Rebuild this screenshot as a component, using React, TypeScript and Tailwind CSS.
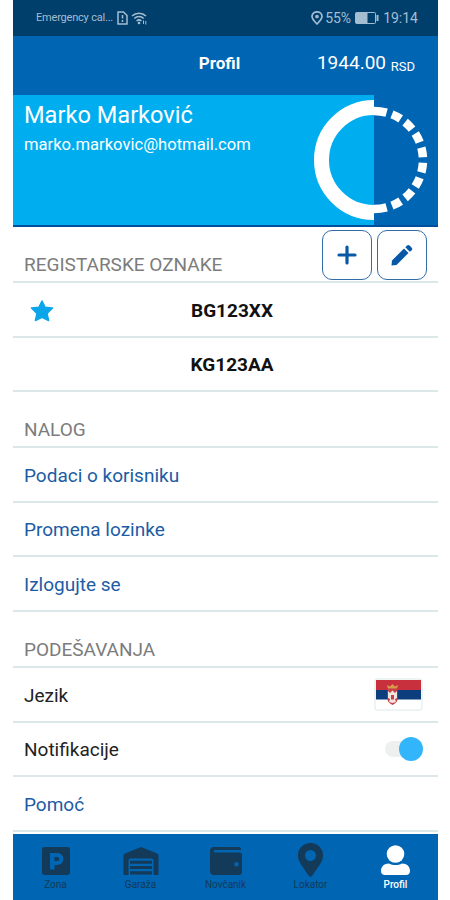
import React from "react";
import { clsx } from "clsx";

type Tab = {
  label: string;
  icon: React.ReactNode;
  active?: boolean;
};

const tabs: Tab[] = [
  {
    label: "Zona",
    icon: (
      <svg width="28" height="28" viewBox="0 0 28 28" fill="currentColor" fillRule="evenodd">
        <path d="M3 0h22a3 3 0 0 1 3 3v22a3 3 0 0 1-3 3H3a3 3 0 0 1-3-3V3a3 3 0 0 1 3-3ZM8 6v16.500h4.500v-4.500h3a6 6 0 0 0 0-12ZM12.500 10h2.800a2 2 0 0 1 0 4h-2.800Z" />
      </svg>
    ),
  },
  {
    label: "Garaža",
    icon: (
      <svg width="36" height="28" viewBox="0 0 36 28" fill="currentColor" fillRule="evenodd">
        <path d="M18 0 34 6.500a2.500 2.500 0 0 1 1.500 2.300V28H30.500V13.500a2 2 0 0 0-2-2h-21a2 2 0 0 0-2 2V28H.5V8.800A2.500 2.500 0 0 1 2 6.500Z" />
        <path d="M7 13.800h22v3H7ZM7 19h22v3H7ZM7 24.300h22v3.200H7Z" />
      </svg>
    ),
  },
  {
    label: "Novčanik",
    icon: (
      <svg width="32" height="28" viewBox="0 0 32 28" fill="currentColor" fillRule="evenodd">
        <path d="M4 0h24.500A2.500 2.500 0 0 1 31 2.500V3H5a1 1 0 0 0 0 2.500h24A3 3 0 0 1 32 8.500V25a3 3 0 0 1-3 3H4a4 4 0 0 1-4-4V4a4 4 0 0 1 4-4ZM26.500 15a2.200 2.200 0 1 0 0 4.400 2.200 2.200 0 0 0 0-4.400Z" />
      </svg>
    ),
  },
  {
    label: "Lokator",
    icon: (
      <svg className="-mb-[2px]" width="25" height="34" viewBox="0 0 25 34" fill="currentColor" fillRule="evenodd">
        <path d="M12.500 0A12.400 12.400 0 0 0 0 12.400C0 17.500 2 20 11 33a1.800 1.800 0 0 0 3 0C23 20 25 17.500 25 12.400A12.400 12.400 0 0 0 12.500 0ZM12.500 7a5.500 5.500 0 1 1 0 11 5.500 5.500 0 0 1 0-11Z" />
      </svg>
    ),
  },
  {
    label: "Profil",
    active: true,
    icon: (
      <svg width="29" height="30" viewBox="0 0 29 30" fill="currentColor">
        <circle cx="14.500" cy="9" r="8.800" />
        <path d="M8 18.500c2 1 4.200 1.500 6.500 1.500s4.500-.5 6.500-1.500c5 0 8 3 8 7.500 0 2.500-1.500 4-4 4H4c-2.500 0-4-1.500-4-4 0-4.500 3-7.500 8-7.500Z" />
      </svg>
    ),
  },
];

function StatusBar() {
  return (
    <div className="flex h-9 items-center bg-[#003e6b] pr-5 pl-[23px] text-[#a4bdd1]">
      <span className="text-[11px] tracking-[-0.200px]">Emergency cal...</span>
      <svg className="ml-1" width="11" height="14" viewBox="0 0 11 14" fill="none" stroke="currentColor" strokeWidth="1.500">
        <path d="M1 1h5.500L10 4.500V13H1ZM5.500 4v3.500M5.500 9v2" />
      </svg>
      <svg className="ml-[3px]" width="17" height="14" viewBox="0 0 17 14" fill="none" stroke="currentColor" strokeWidth="1.500">
        <path d="M1 5a10 10 0 0 1 14 0M3.300 7.500a6.700 6.700 0 0 1 9.400 0M5.600 10a3.500 3.500 0 0 1 4.800 0" />
        <circle cx="8" cy="12" r="1.300" fill="currentColor" stroke="none" />
        <path d="M12.500 9.500v3.500M14.800 10v3.500" strokeWidth="1" />
      </svg>
      <div className="ml-auto flex items-center text-[14px]">
        <svg width="12" height="14" viewBox="0 0 12 14" fill="none" stroke="currentColor" strokeWidth="1.700">
          <path d="M6 13C2.500 9.500 1 7.500 1 5.500a5 4.700 0 0 1 10 0C11 7.500 9.500 9.500 6 13Z" />
          <circle cx="6" cy="5.500" r="1" />
        </svg>
        <span className="ml-[2px]">55%</span>
        <svg className="ml-1" width="24" height="12" viewBox="0 0 24 12" fill="none" stroke="currentColor">
          <rect x=".5" y=".5" width="20" height="11" rx="1" />
          <path d="M1 1h11v10H1Z" fill="currentColor" />
          <path d="M22.500 3v6" strokeWidth="2" />
        </svg>
        <span className="ml-1">19:14</span>
      </div>
    </div>
  );
}

function ProfileCard() {
  return (
    <div className="flex h-[132px] border-b-2 border-[#004f9e] bg-linear-to-r from-[#00aeef] from-[361px] to-[#0065b3] to-[361px]">
      <div className="pl-[11px] pt-1 text-white">
        <h1 className="text-[23.600px] leading-[32px]">Marko Marković</h1>
        <p className="text-[16.600px] leading-[27px]">marko.markovic@hotmail.com</p>
      </div>
      <svg className="mt-[5px] mr-[10px] ml-auto" width="115" height="120" viewBox="0 0 115 120" fill="none" stroke="#fff">
        <path d="M61 7.500A52.500 52.500 0 0 0 61 112.500" strokeWidth="15" />
        <path
          d="M61 11A49 49 0 0 1 61 109"
          strokeWidth="8.500"
          pathLength="180"
          strokeDasharray="15 6.500 11.500 6.430 11.500 6.430 11.500 6.430 11.500 6.430 11.500 6.430 11.500 6.430 11.500 6.430 11.500 6.500 15 0"
        />
      </svg>
    </div>
  );
}

function SectionTitle({ title, children }: { title: string; children?: React.ReactNode }) {
  return (
    <div className="flex h-14 justify-between border-b-2 border-[#dbe7e8] pr-[11px] pl-[11px]">
      <h2 className="self-end pb-1 text-[19px] leading-[24px] text-[#7c7c7c]">{title}</h2>
      {children}
    </div>
  );
}

function Row({ children }: { children: React.ReactNode }) {
  return (
    <div className="flex h-[54.600px] items-center border-b-2 border-[#dbe7e8] px-[11px] pt-[3px] text-[19px]">
      {children}
    </div>
  );
}

function Flag() {
  return (
    <svg className="-mt-[3px] mr-1 ml-auto" width="49" height="33" viewBox="0 0 49 33">
      <rect x="1" y="1" width="47" height="31" rx="2" fill="#fff" stroke="#dce9e9" />
      <path d="M2 2h45v10.300H2Z" fill="#c9303e" />
      <path d="M2 12h45v9.500H2Z" fill="#0c3d7c" />
      <path d="M13.500 11h10v10c0 3-2 4.500-5 6-3-1.500-5-3-5-6Z" fill="#c9404a" />
      <path d="M14 10.500 13 7l3 1.500L18.500 6 21 8.500 24 7l-1 3.500Z" fill="#d99b49" />
      <path d="M18.500 12.500 21 15l2-2v7l-2 1 1 3-3.500 1-3.500-1 1-3-2-1v-7l2 2Z" fill="#f0e4df" />
      <path d="M17 17h3v4.500h-3Z" fill="#c9404a" />
    </svg>
  );
}

function TabBar() {
  return (
    <nav className="mt-[2px] grid h-[66px] grid-cols-5 bg-[#0065b3]">
      {tabs.map((tab) => (
        <div
          key={tab.label}
          className={clsx("flex flex-col items-center", tab.active ? "text-white" : "text-[#143a59]")}
        >
          <div className="flex h-[42px] items-end justify-center pb-[1px]">{tab.icon}</div>
          <span className={clsx("pt-[2px] text-[10px] leading-[14px]", tab.active && "font-medium")}>{tab.label}</span>
        </div>
      ))}
    </nav>
  );
}

export default function App() {
  return (
    <div className="h-[900px] w-[450px] bg-white">
      <div className="ml-[13px] h-[900px] w-[425px] overflow-hidden font-['Roboto',sans-serif]">
        <StatusBar />

        <header className="grid h-[59px] grid-cols-3 items-center bg-[#0065b3] text-white">
          <span className="col-start-2 pr-3 pb-[4px] text-center text-[17px] font-bold">Profil</span>
          <span className="pr-[23px] pb-[4px] text-right text-[19px]">
            1944.00 <span className="relative top-[2px] text-[13px]">RSD</span>
          </span>
        </header>

        <ProfileCard />

        <SectionTitle title="REGISTARSKE OZNAKE">
          <div className="flex gap-[5px] pt-[3px]">
            <button className="flex size-[50px] items-center justify-center rounded-[10px] border border-[#326da8] text-[#0958a8]">
              <svg width="20" height="20" viewBox="0 0 20 20" stroke="currentColor" strokeWidth="3.200" strokeLinecap="round">
                <path d="M10 2v16M2 10h16" />
              </svg>
            </button>
            <button className="flex size-[50px] items-center justify-center rounded-[10px] border border-[#326da8] text-[#0958a8]">
              <svg width="22" height="22" viewBox="0 0 22 22" fill="currentColor">
                <path d="M.5 21.500 1 16.500 13 4.500l4.500 4.500L5.500 21Z" />
                <path d="m14.300 3.300 1.500-1.500c1-1 2-1 3 0L20.500 3.500c1 1 1 2 0 3L18.800 7.800Z" />
              </svg>
            </button>
          </div>
        </SectionTitle>
        <Row>
          <div className="grid w-full grid-cols-[1fr_auto_1fr] items-center">
            <svg className="ml-[6px]" width="24" height="24" viewBox="0 0 24 24" fill="#0ba6ea" stroke="#0ba6ea" strokeWidth="1.500" strokeLinejoin="round">
              <path d="m12 2 3 6.200 7.500.8-5.500 5.500 1.600 7L12 18.300 5.400 21.500 7 14.500l-5.500-5.500L9 8.200Z" />
            </svg>
            <span className="pl-[13px] font-bold text-[#111]">BG123XX</span>
          </div>
        </Row>
        <Row>
          <span className="w-full pl-[13px] text-center font-bold text-[#111]">KG123AA</span>
        </Row>

        <SectionTitle title="NALOG" />
        <Row><span className="text-[#1c5ca5]">Podaci o korisniku</span></Row>
        <Row><span className="text-[#1c5ca5]">Promena lozinke</span></Row>
        <Row><span className="text-[#1c5ca5]">Izlogujte se</span></Row>

        <SectionTitle title="PODEŠAVANJA" />
        <Row>
          <span className="text-[#222]">Jezik</span>
          <Flag />
        </Row>
        <Row>
          <span className="text-[#222]">Notifikacije</span>
          <div className="-mt-[2px] mr-1 ml-auto flex h-4 w-[38px] items-center justify-end rounded-full bg-[#eeefef]">
            <div className="size-6 shrink-0 rounded-full bg-[#33b5fb]" />
          </div>
        </Row>
        <Row><span className="text-[#1c5ca5]">Pomoć</span></Row>

        <TabBar />
      </div>
    </div>
  );
}
